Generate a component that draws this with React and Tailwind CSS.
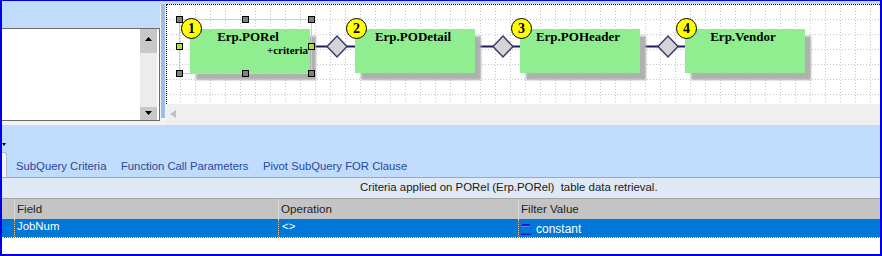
import React from "react";

const nodes = [
  { x: 23, label: "Erp.PORel", num: 1, criteria: true },
  { x: 188, label: "Erp.PODetail", num: 2 },
  { x: 353, label: "Erp.POHeader", num: 3 },
  { x: 518, label: "Erp.Vendor", num: 4 },
];

const diamonds = [170, 336, 501];

const handles = [
  { x: 12, y: 14, green: false },
  { x: 78, y: 14, green: false },
  { x: 144, y: 14, green: false },
  { x: 12, y: 41, green: true },
  { x: 144, y: 41, green: true },
  { x: 12, y: 68, green: false },
  { x: 78, y: 68, green: false },
  { x: 144, y: 68, green: false },
];

const ArrowUp = () => (
  <svg width="7" height="4" viewBox="0 0 7 4">
    <polygon points="3.5,0 7,4 0,4" fill="#000" />
  </svg>
);

const ArrowDown = () => (
  <svg width="7" height="4" viewBox="0 0 7 4">
    <polygon points="0,0 7,0 3.5,4" fill="#000" />
  </svg>
);

const LeftPanel = () => (
  <div className="w-[158px] flex flex-col bg-[#f3f3f3]">
    <div className="h-[27px] bg-[#c0dbfc]" />
    <div className="h-[93px] bg-white border-y border-r border-[#6c6c6c] flex justify-end pr-[2px]">
      {/* scrollbar */}
      <div className="w-[17px] flex flex-col">
        <div className="h-[24px] bg-[#c8c8c8] flex justify-center pt-[8px]">
          <ArrowUp />
        </div>
        <div className="flex-1 bg-[#ececec]" />
        <div className="h-[13px] bg-[#c8c8c8] flex justify-center pt-[4px]">
          <ArrowDown />
        </div>
      </div>
    </div>
  </div>
);

const Splitter = () => (
  <div className="w-[6px] flex flex-col bg-[#f3f3f3]">
    <div className="h-[3px] bg-[#c0dbfc]" />
    <div className="h-[114px] ml-[1px] w-[4px] bg-[#9dbde8]" />
  </div>
);

const Diagram = () => (
  <div className="flex-1 flex flex-col">
    <div className="h-[3px] bg-[#c0dbfc]" />
    <div className="h-[100px] relative bg-white border-t border-l border-dotted border-black overflow-hidden">
      <svg className="absolute inset-0 w-full h-full">
        <defs>
          <pattern id="grid" width="15" height="15" patternUnits="userSpaceOnUse">
            <path d="M0 14.5H15" stroke="#c6c6c6" strokeDasharray="1 2" />
            <path d="M13.5 0V15" stroke="#c6c6c6" strokeDasharray="1 2" />
          </pattern>
        </defs>
        <rect width="100%" height="100%" fill="url(#grid)" />
        <line x1="144" y1="41.5" x2="640" y2="41.5" stroke="#1e1e5e" strokeWidth="2" />
        {diamonds.map((cx) => (
          <polygon
            key={cx}
            points={`${cx},31 ${cx + 10},41.5 ${cx},52 ${cx - 10},41.5`}
            fill="#d4d4d4"
            stroke="#3d3d6d"
            strokeWidth="1.5"
          />
        ))}
      </svg>

      {nodes.map((n) => (
        <div
          key={n.num}
          className="absolute top-[24px] w-[120px] h-[44px] bg-[#90ee90] shadow-[6px_7px_2px_#b0b0b0] font-['Liberation_Serif',serif] font-bold text-black"
          style={{ left: n.x }}
        >
          <div className="text-[13px] leading-[15px] text-center pr-[4px]">{n.label}</div>
          {n.criteria && (
            <div className="text-[11px] leading-[13px] text-right pr-[2px]">+criteria</div>
          )}
        </div>
      ))}

      {/* selection of first node */}
      <div className="absolute left-[12px] top-[14px] w-[133px] h-[55px] border border-[#b8ec66]" />
      {handles.map((h, i) => (
        <div
          key={i}
          className={
            h.green
              ? "absolute w-[7px] h-[7px] border border-black bg-[#a6e63c]"
              : "absolute w-[7px] h-[7px] border border-black bg-[#808080]"
          }
          style={{ left: h.x - 3, top: h.y - 3 }}
        />
      ))}

      {nodes.map((n) => (
        <div
          key={"b" + n.num}
          className="absolute top-[13px] w-[21px] h-[21px] rounded-full bg-[#ffff00] border border-black flex items-center justify-center font-['Liberation_Serif',serif] font-bold text-[14px] leading-none text-black"
          style={{ left: n.x - 9 }}
        >
          {n.num}
        </div>
      ))}
    </div>
    <div className="h-[21px] bg-[#efefef] pl-[4px] pt-[6px]">
      <svg width="6" height="8" viewBox="0 0 6 8">
        <polygon points="6,0 6,8 0,4" fill="#c0c0c0" />
      </svg>
    </div>
  </div>
);

const TabBar = () => {
  const tabs = ["SubQuery Criteria", "Function Call Parameters", "Pivot SubQuery FOR Clause"];
  return (
    <div className="h-[52px] shrink-0 relative bg-[#c0dbfc] flex items-end">
      <svg className="absolute left-0 top-[18px]" width="4" height="4" viewBox="0 0 4 4">
        <polygon points="0,0 4,0 2,3" fill="#000" />
      </svg>
      <div className="w-[5px] h-[25px] bg-[#f3f6fb] border-t border-r border-[#a9bad4] rounded-tr-[3px]" />
      <div className="h-[22px] ml-[9px] flex items-center gap-[14.5px] text-[11.3px] text-[#284a9a]">
        {tabs.map((t) => (
          <span key={t}>{t}</span>
        ))}
      </div>
    </div>
  );
};

const InfoBar = () => (
  <div className="h-[21px] shrink-0 border-t border-[#a8a8a8] bg-[#dfe8f5] flex items-center pl-[358px] text-[11.4px] text-[#1a1a1a]">
    Criteria applied on PORel (Erp.PORel)&nbsp; table data retrieval.
  </div>
);

const CriteriaGrid = () => (
  <div className="flex-1 flex flex-col">
    {/* header */}
    <div className="h-[21px] shrink-0 border-t border-[#a4a4a4] bg-[#c4c4c4] flex text-[11.6px] text-[#1e1e1e]">
      <div className="w-[12px]" />
      <div className="w-[264px] border-l border-[#dadada] pl-[2px] flex items-center">Field</div>
      <div className="w-[240px] border-l border-[#dadada] pl-[2px] flex items-center">Operation</div>
      <div className="flex-1 border-l border-[#dadada] pl-[2px] flex items-center">Filter Value</div>
    </div>
    {/* row */}
    <div className="h-[18px] shrink-0 bg-[#0078d7] flex text-white">
      <div className="w-[12px]" />
      <div className="w-[264px] border-l border-dotted border-[#e6c79c] pl-[2px] pb-[3px] flex items-center text-[11.4px]">
        JobNum
      </div>
      <div className="w-[240px] border-l border-dotted border-[#e6c79c] pl-[3px] pb-[3px] flex items-center text-[11.4px]">
        &lt;&gt;
      </div>
      <div className="flex-1 border-l border-dotted border-[#e6c79c] pl-[2px] flex items-end">
        <svg width="11" height="13" viewBox="0 0 11 13" className="mb-[1px]">
          <rect x="1" y="1" width="8" height="2" fill="#1c1cd8" />
          <rect x="1" y="3" width="8" height="1" fill="#5a8ae6" />
          <rect x="0" y="10.5" width="10" height="1.5" fill="#1c1cd8" />
        </svg>
        <span className="ml-[4px] text-[12px] leading-[16px]">constant</span>
      </div>
    </div>
    <div className="h-[1px] shrink-0 bg-[#0078d7] border-t border-dotted border-white" />
    <div className="flex-1 bg-white" />
  </div>
);

export default function App() {
  return (
    <div className="w-[882px] h-[256px] overflow-hidden flex flex-col bg-white border-x-2 border-t border-b-2 border-[#0000e6] font-['Liberation_Sans',Arial,sans-serif]">
      <div className="h-[124px] shrink-0 flex">
        <LeftPanel />
        <Splitter />
        <Diagram />
      </div>
      <TabBar />
      <InfoBar />
      <CriteriaGrid />
    </div>
  );
}
